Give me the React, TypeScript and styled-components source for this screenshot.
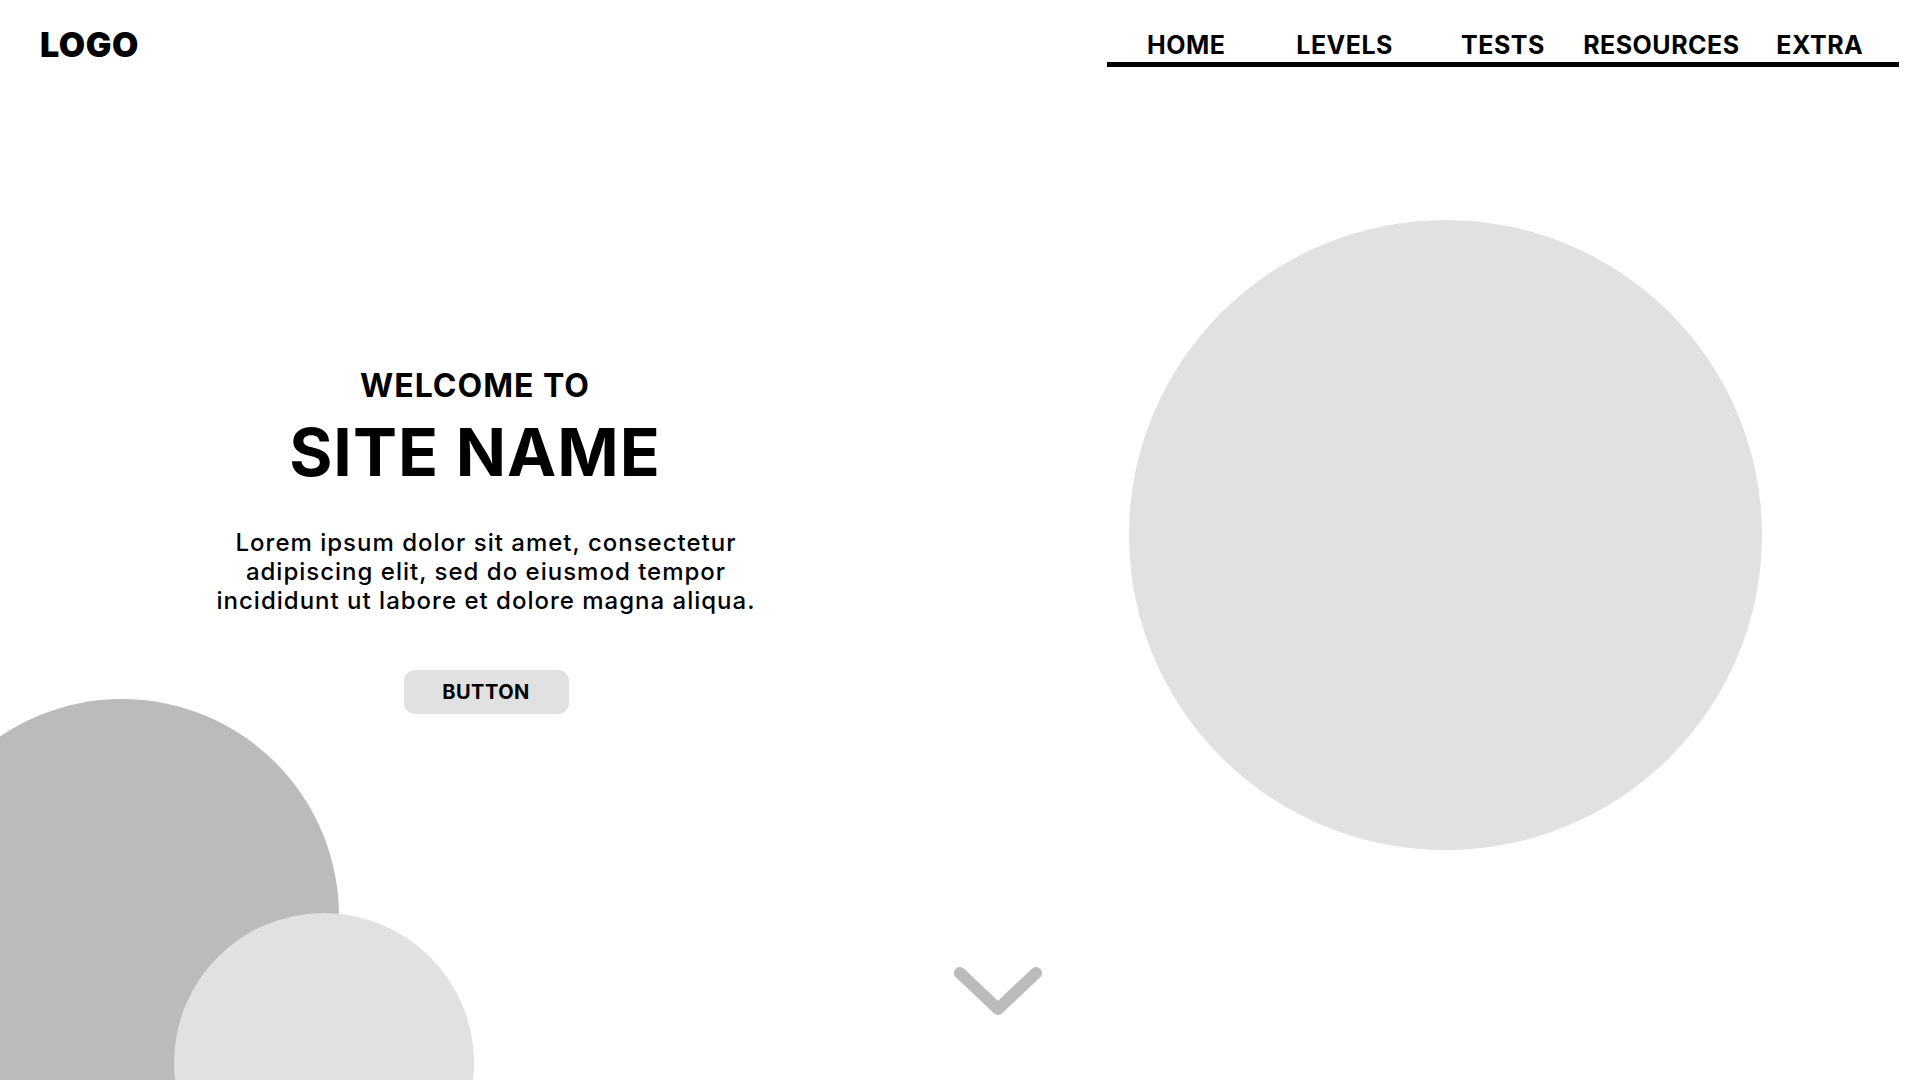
import React from 'react'
import styled, { createGlobalStyle } from 'styled-components'

const GlobalStyle = createGlobalStyle`
  html, body {
    margin: 0;
    padding: 0;
    background: #ffffff;
  }
  body {
    font-family: Inter, "Open Sans", "Liberation Sans", sans-serif;
    color: #000000;
  }
`

const navItems = ['HOME', 'LEVELS', 'TESTS', 'RESOURCES', 'EXTRA']

const App = () => {
  return (
    <Page>
      <GlobalStyle />
      <Header>
        <Logo>LOGO</Logo>
        <Nav>
          {navItems.map((item) => (
            <NavLink key={item} href="#">{item}</NavLink>
          ))}
        </Nav>
      </Header>

      <Hero>
        <Intro>
          <Welcome>WELCOME TO</Welcome>
          <SiteName>SITE NAME</SiteName>
          <Text>
            Lorem ipsum dolor sit amet, consectetur
            <br /> adipiscing elit, sed do eiusmod tempor
            <br /> incididunt ut labore et dolore magna aliqua.
          </Text>
          <Button>BUTTON</Button>
        </Intro>
        <Visual>
          <BigCircle />
        </Visual>
      </Hero>

      <ScrollDown aria-label="scroll down">
        <svg width="90" height="52" viewBox="0 0 90 52" fill="none">
          <path
            d="M7 7 L45 43 L83 7"
            stroke="#bbbbbb"
            strokeWidth="12"
            strokeLinecap="round"
            strokeLinejoin="round"
          />
        </svg>
      </ScrollDown>

      <Blob size={434} left={-95} top={699} color="#bbbbbb" />
      <Blob size={300} left={174} top={913} color="#e1e1e1" />
    </Page>
  )
}

export default App

const Page = styled.div`
  position: relative;
  width: 1920px;
  height: 1080px;
  overflow: hidden;
  background: #ffffff;
`

const Header = styled.header`
  display: flex;
  justify-content: space-between;
  align-items: flex-start;
  height: 67px;
  padding: 0 21px 0 40px;
`

const Logo = styled.div`
  margin-top: 25px;
  font-size: 34px;
  font-weight: 900;
  letter-spacing: 0.6px;
  line-height: 40px;
`

const Nav = styled.nav`
  display: grid;
  grid-template-columns: repeat(5, 1fr);
  width: 792px;
  margin-top: 28px;
  border-bottom: 5px solid #000000;
`

const NavLink = styled.a`
  display: block;
  text-align: center;
  font-size: 25px;
  font-weight: 700;
  letter-spacing: 0.5px;
  line-height: 34px;
  color: #000000;
  text-decoration: none;
`

const Hero = styled.main`
  display: grid;
  grid-template-columns: 972px 1fr;
  align-items: start;
`

const Intro = styled.section`
  display: flex;
  flex-direction: column;
  align-items: center;
  padding-top: 301px;
`

const Welcome = styled.h2`
  margin: 0 22px 0 0;
  font-size: 32px;
  font-weight: 700;
  letter-spacing: 1px;
  line-height: 36px;
`

const SiteName = styled.h1`
  margin: 10px 22px 0 0;
  font-size: 66px;
  font-weight: 700;
  letter-spacing: 1px;
  line-height: 76px;
`

const Text = styled.p`
  margin: 38px 0 0;
  font-size: 24px;
  font-weight: 500;
  letter-spacing: 1px;
  line-height: 29px;
  text-align: center;
`

const Button = styled.button`
  margin-top: 55px;
  width: 165px;
  height: 44px;
  border: none;
  border-radius: 11px;
  background: #e1e1e1;
  font-family: inherit;
  font-size: 20px;
  font-weight: 700;
  letter-spacing: 0.5px;
  color: #000000;
`

const Visual = styled.div`
  padding: 153px 0 0 157px;
`

const BigCircle = styled.div`
  width: 633px;
  height: 630px;
  border-radius: 50%;
  background: #e1e1e1;
`

const ScrollDown = styled.div`
  position: absolute;
  left: 953px;
  top: 966px;
  display: flex;
`

const Blob = styled.div<{ size: number; left: number; top: number; color: string }>`
  position: absolute;
  left: ${(p) => p.left}px;
  top: ${(p) => p.top}px;
  width: ${(p) => p.size}px;
  height: ${(p) => p.size}px;
  border-radius: 50%;
  background: ${(p) => p.color};
`
